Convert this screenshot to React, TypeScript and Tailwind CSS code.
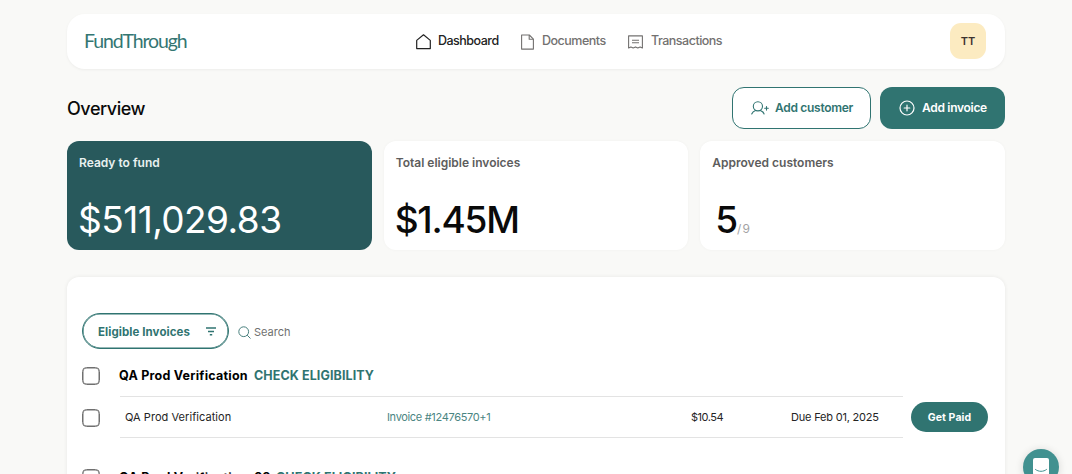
import type { ReactNode } from "react";

const HomeIcon = () => (
  <svg className="shrink-0" width="15" height="16" viewBox="0 0 15 16" fill="none" stroke="currentColor" strokeWidth="1.2" strokeLinejoin="round">
    <path d="M.7 14.6V6.4L7.5.8l6.8 5.6v8.2H.7Z" />
  </svg>
);

const DocumentIcon = () => (
  <svg className="shrink-0" width="13" height="16" viewBox="0 0 13 16" fill="none" stroke="currentColor" strokeWidth="1.1" strokeLinejoin="round">
    <path d="M.6 1h7.7l4.1 4.2v9.9H.6V1Z" />
    <path d="M8.2 1v4.3h4.2" />
  </svg>
);

const ReceiptIcon = () => (
  <svg className="shrink-0" width="15" height="14" viewBox="0 0 15 14" fill="none" stroke="currentColor" strokeWidth="1.1" strokeLinejoin="round">
    <path d="M.6.9h13.8V13l-2.3-1.1L9.8 13l-2.3-1.1L5.2 13l-2.3-1.1L.6 13V.9Z" />
    <path d="M4 5.2h7M4 7.8h7" />
  </svg>
);

const AddUserIcon = () => (
  <svg className="shrink-0" width="18" height="14" viewBox="0 0 18 14" fill="none" stroke="currentColor" strokeWidth="1.1" strokeLinecap="round">
    <circle cx="6.9" cy="5.3" r="4.6" />
    <path d="M.7 13c.7-1.8 2-3 3.8-3.6M9.3 9.4c1.8.6 3.1 1.8 3.8 3.6M13.7 7.3h3.6M15.5 5.5v3.6" />
  </svg>
);

const PlusCircleIcon = () => (
  <svg className="shrink-0" width="16" height="16" viewBox="0 0 16 16" fill="none" stroke="currentColor" strokeWidth="1.2" strokeLinecap="round">
    <circle cx="8" cy="8" r="7" />
    <path d="M8 5.2v5.6M5.2 8h5.6" />
  </svg>
);

const navItems = [
  { label: "Dashboard", icon: <HomeIcon />, style: "w-[83px] gap-[7px] tracking-[-0.5px] text-[#222]" },
  { label: "Documents", icon: <DocumentIcon />, style: "w-[85px] gap-2 tracking-[-0.5px] text-[#737170]" },
  { label: "Transactions", icon: <ReceiptIcon />, style: "w-[94px] gap-2 tracking-[-0.5px] text-[#737170]" },
];

function StatCard({ label, dark, children }: { label: string; dark?: boolean; children: ReactNode }) {
  return (
    <div
      className={`flex h-[109px] flex-col rounded-xl px-3 pt-3.5 ${
        dark ? "bg-[#28595c] text-white" : "bg-white text-[#0a0a0a] shadow-[0_0_3px_rgba(0,0,0,0.04)]"
      }`}
    >
      <div className={`text-[12px] leading-4 font-semibold ${dark ? "text-[#e9f1f0]" : "text-[#5d5d5d]"}`}>{label}</div>
      <div className="mt-[26px] -ml-px flex items-baseline text-[37px] leading-[46px] tracking-[-0.55px]">{children}</div>
    </div>
  );
}

function Checkbox() {
  return (
    <span className="block size-[18px] shrink-0 rounded-[4.5px] border border-[#707070] bg-white shadow-[inset_0_0_0_0.5px_#707070]" />
  );
}

function CustomerHeading({ name, nameStyle }: { name: string; nameStyle: string }) {
  return (
    <div className="flex h-[18px] items-center">
      <Checkbox />
      <div className={`ml-[19px] text-[12.5px] font-bold tracking-[0.24px] whitespace-nowrap text-black ${nameStyle}`}>{name}</div>
      <a className="text-[12.5px] font-bold tracking-[0.1px] whitespace-nowrap text-[#307471]">CHECK ELIGIBILITY</a>
    </div>
  );
}

export default function App() {
  return (
    <div className="relative h-[474px] w-[1072px] overflow-hidden bg-[#f9f9f7] pt-3.5 pl-[67px] font-['Inter','Liberation_Sans',sans-serif]">
      <div className="w-[938px]">
        {/* Top navigation */}
        <header className="flex h-[55px] items-center rounded-[18px] bg-white pr-[19px] pl-[17px] shadow-[0_1px_3px_rgba(0,0,0,0.05)]">
          <div className="w-[332px] pb-0.5 font-['Lato',sans-serif] text-[19.5px] leading-6 tracking-[-1.1px] text-[#347672]">
            FundThrough
          </div>
          <nav className="flex gap-[22px]">
            {navItems.map((item) => (
              <a key={item.label} className={`flex items-center text-[12.5px] font-medium whitespace-nowrap ${item.style}`}>
                {item.icon}
                {item.label}
              </a>
            ))}
          </nav>
          <div className="mb-px ml-auto flex size-9 items-center justify-center rounded-[11px] bg-[#fcebc1] text-[11px] font-semibold text-[#3c332f]">
            TT
          </div>
        </header>

        {/* Page title and actions */}
        <div className="mt-[18px] flex h-[42px] items-center">
          <h1 className="text-[18px] font-medium tracking-[-0.45px] text-[#0a0a0a]">Overview</h1>
          <div className="ml-auto flex gap-[9px]">
            <button className="flex h-[42px] w-[139px] items-center gap-1.5 rounded-xl border border-[#307471] bg-white pl-[18px] text-[12px] font-semibold tracking-[-0.3px] whitespace-nowrap text-[#307471]">
              <AddUserIcon />
              Add customer
            </button>
            <button className="flex h-[42px] w-[125px] items-center gap-[7px] rounded-xl bg-[#307471] pl-[19px] text-[12px] font-semibold tracking-[-0.3px] whitespace-nowrap text-white">
              <PlusCircleIcon />
              Add invoice
            </button>
          </div>
        </div>

        {/* Summary cards */}
        <div className="mt-3 grid grid-cols-3 gap-3">
          <StatCard label="Ready to fund" dark>
            $511,029.83
          </StatCard>
          <StatCard label="Total eligible invoices">
            <span className="font-medium tracking-[-1.2px]">$1.45M</span>
          </StatCard>
          <StatCard label="Approved customers">
            <span className="ml-1 font-medium tracking-[-1.2px]">5</span>
            <span className="text-[12px] tracking-[1.2px] text-[#a3a3a3]">/9</span>
          </StatCard>
        </div>

        {/* Invoices */}
        <main className="mt-[27px] h-[300px] rounded-xl bg-white px-[15px] pt-9 shadow-[0_0_4px_rgba(0,0,0,0.07)]">
          <div className="flex items-center">
            <button className="flex h-9 w-[147px] items-center rounded-full border border-[#307471] pl-[15px] text-[11.5px] font-bold whitespace-nowrap text-[#307471] shadow-[inset_0_0_0_0.6px_#307471]">
              <span className="w-[108px] pt-[3px] text-left tracking-[0.08px]">Eligible Invoices</span>
              <svg width="10" height="9" viewBox="0 0 10 9" fill="none" stroke="currentColor" strokeWidth="1.5">
                <path d="M0 1h10M2 4.4h6M3.8 7.8h2.4" />
              </svg>
            </button>
            <div className="ml-[9px] flex items-center gap-[3px] pt-[3px] text-[11px] text-[#707070]">
              <svg width="13" height="13" viewBox="0 0 13 13" fill="none" stroke="#487f7d">
                <circle cx="5.7" cy="5.7" r="4.9" />
                <path d="m9.2 9.2 3.3 3.3" />
              </svg>
              Search
            </div>
          </div>

          <div className="mt-[18px]">
            <CustomerHeading name="QA Prod Verification" nameStyle="w-[135px]" />
          </div>

          <div className="mt-[11px] flex items-center text-[11px] text-[#242424]">
            <div className="pt-px">
              <Checkbox />
            </div>
            <div className="ml-5 flex h-[42px] w-[783px] items-center border-y border-[#e3e3e3] pl-[5px] whitespace-nowrap">
              <span className="w-[262px] tracking-[0.05px]">QA Prod Verification</span>
              <span className="w-[304px] tracking-[-0.33px] text-[#4a8582]">Invoice #12476570+1</span>
              <span className="w-[100px] tracking-[-0.5px]">$10.54</span>
              <span className="tracking-[-0.2px]">Due Feb 01, 2025</span>
            </div>
            <button className="ml-2 h-[30px] w-[77px] rounded-full bg-[#307471] pt-px text-[10.5px] font-bold tracking-[0.1px] text-white">
              Get Paid
            </button>
          </div>

          <div className="mt-[31px]">
            <CustomerHeading name="QA Prod Verification-02" nameStyle="w-[157px]" />
          </div>
        </main>
      </div>

      {/* Chat launcher */}
      <div className="absolute top-[449px] left-[1023px] flex size-9 justify-center rounded-full bg-[#419190] pt-[9px] shadow-[0_1px_8px_rgba(0,0,0,0.14)]">
        <svg width="16" height="19" viewBox="0 0 16 19">
          <path d="M2 0h12a2 2 0 0 1 2 2v17l-4-2H2a2 2 0 0 1-2-2V2a2 2 0 0 1 2-2Z" fill="#fff" />
          <path d="M2.5 11.5c3 2.5 8 2.5 11 0" fill="none" stroke="#419190" strokeLinecap="round" />
        </svg>
      </div>
    </div>
  );
}
